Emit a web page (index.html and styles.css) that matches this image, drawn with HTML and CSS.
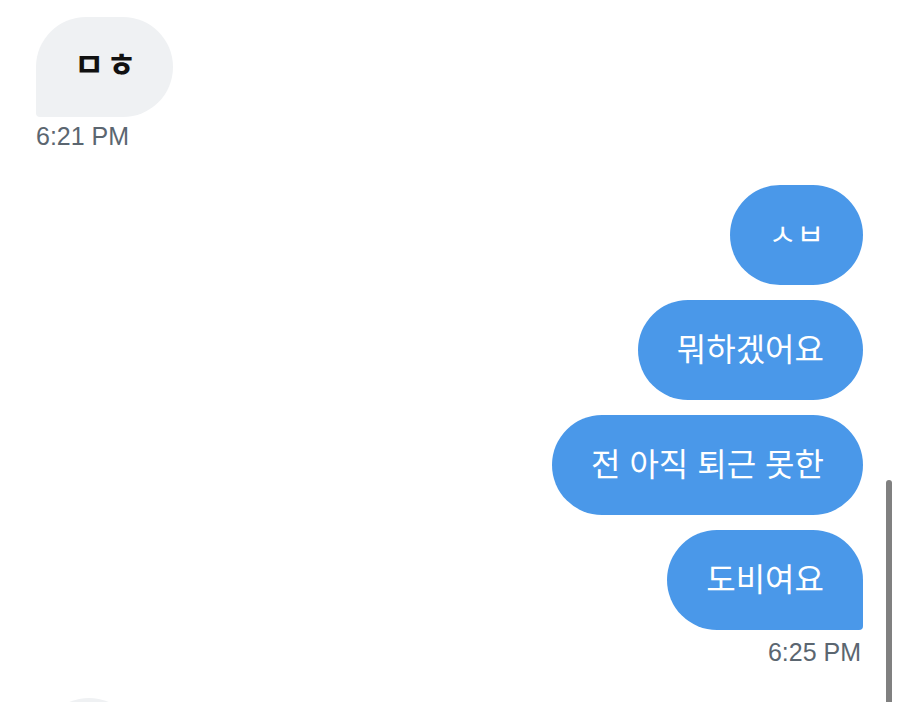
FILE: index.html
```html
<!DOCTYPE html>
<html lang="ko">
<head>
<meta charset="utf-8">
<title>DM</title>
<link rel="stylesheet" href="styles.css">
</head>
<body>
<div class="chat">
  <div class="group received">
    <div class="bubble in">ㅁㅎ</div>
    <div class="time">6:21 PM</div>
  </div>
  <div class="group sent">
    <div class="bubble out jamo">ㅅㅂ</div>
    <div class="bubble out">뭐하겠어요</div>
    <div class="bubble out">전 아직 퇴근 못한</div>
    <div class="bubble out last">도비여요</div>
    <div class="time">6:25 PM</div>
  </div>
  <div class="group received next">
    <div class="bubble in">&nbsp;</div>
  </div>
</div>
<div class="scrollbar"></div>
</body>
</html>
```
FILE: styles.css
```css
html, body {
  margin: 0;
  padding: 0;
  background: #ffffff;
  overflow: hidden;
  height: 702px;
}
body {
  font-family: "Noto Sans CJK KR", "Noto Sans", sans-serif;
  position: relative;
}
.chat {
  display: flex;
  flex-direction: column;
  padding-top: 17px;
}
.group {
  display: flex;
  flex-direction: column;
  gap: 15px;
}
.received {
  align-items: flex-start;
  padding-left: 36px;
}
.sent {
  align-items: flex-end;
  padding-right: 37px;
  margin-top: 35px;
}
.next {
  margin-top: 32px;
  padding-left: 39px;
}
.bubble {
  height: 100px;
  display: flex;
  align-items: center;
  justify-content: center;
  box-sizing: border-box;
  font-size: 32px;
  line-height: 40px;
  white-space: nowrap;
}
.in {
  background: #eff1f3;
  color: #111111;
  border-radius: 50px 50px 50px 4px;
  padding: 0 34px 8px 38px;
  font-weight: 700;
  font-size: 33px;
  letter-spacing: 2px;
}
.next .bubble {
  width: 100px;
}
.out {
  background: #4a98e9;
  color: #ffffff;
  border-radius: 50px;
  padding: 0 39px 6px;
}
.out.jamo {
  font-size: 30px;
}
.out.last {
  border-radius: 50px 50px 4px 50px;
}
.time {
  font-family: "Liberation Sans", Arial, sans-serif;
  font-size: 25px;
  line-height: 28px;
  color: #5b6670;
}
.received .time {
  margin-top: -10px;
}
.sent .time {
  margin-top: -7px;
  margin-right: 2px;
}
.scrollbar {
  position: absolute;
  left: 886px;
  top: 480px;
  width: 6px;
  height: 240px;
  border-radius: 3px;
  background: #808080;
}
```
